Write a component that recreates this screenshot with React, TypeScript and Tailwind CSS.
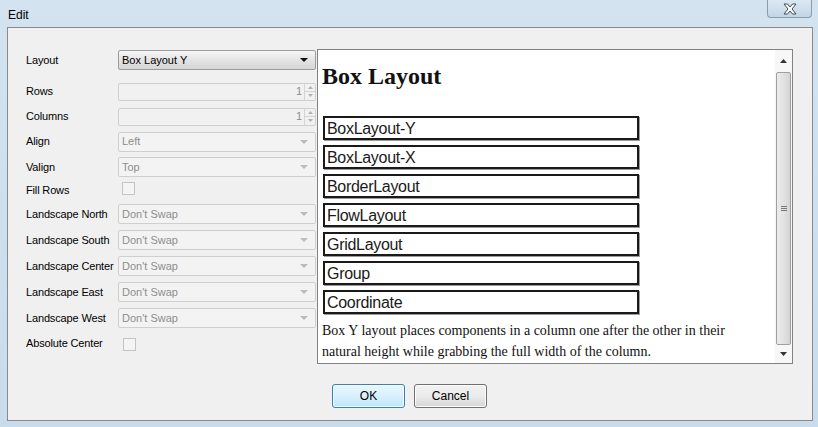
import React from "react";

const labelFont = { fontFamily: '"Liberation Sans", Arial, sans-serif' };

function Arrow({ disabled }: { disabled?: boolean }) {
  return (
    <svg width="8" height="4" viewBox="0 0 8 4" className="shrink-0">
      <path d="M0 0 H8 L4 4 Z" fill={disabled ? "#bcbcbc" : "#111"} />
    </svg>
  );
}

function Combo({ value, disabled }: { value: string; disabled?: boolean }) {
  if (!disabled) {
    return (
      <div className="flex h-[20px] w-[198px] items-center justify-between rounded-[2px] border border-[#9c9c9c] bg-gradient-to-b from-[#f6f6f6] via-[#e4e4e4] to-[#d6d6d6] pl-[3px] pr-[7px] text-[11px] text-black">
        <span>{value}</span>
        <Arrow />
      </div>
    );
  }
  return (
    <div className="flex h-[20px] w-[198px] items-center justify-between rounded-[2px] border border-[#cfcfcf] bg-[#f3f3f3] pl-[3px] pr-[7px] text-[11px] text-[#8e8e8e]">
      <span>{value}</span>
      <Arrow disabled />
    </div>
  );
}

function Spinner() {
  return (
    <div className="flex h-[18px] w-[198px] items-stretch rounded-[2px] border border-[#cfcfcf] bg-[#f1f1f1] text-[11px] text-[#8e8e8e]">
      <span className="flex flex-1 items-center justify-end pr-[2px]">1</span>
      <div className="flex w-[11px] flex-col border-l border-[#d4d4d4]">
        <div className="flex flex-1 items-center justify-center border-b border-[#d4d4d4]">
          <svg width="5" height="3" viewBox="0 0 5 3"><path d="M0 3 L2.5 0 L5 3 Z" fill="#b0b0b0" /></svg>
        </div>
        <div className="flex flex-1 items-center justify-center">
          <svg width="5" height="3" viewBox="0 0 5 3"><path d="M0 0 H5 L2.5 3 Z" fill="#b0b0b0" /></svg>
        </div>
      </div>
    </div>
  );
}

function Check() {
  return <div className="h-[13px] w-[13px] border border-[#c4c4c4] bg-[#f4f4f4]" />;
}

function Row({ label, h, children }: { label: string; h: string; children: React.ReactNode }) {
  return (
    <div className={`flex items-center ${h}`}>
      <span className="w-[92px] text-[11px] tracking-[-0.15px] text-black">{label}</span>
      {children}
    </div>
  );
}

const layouts = ["BoxLayout-Y", "BoxLayout-X", "BorderLayout", "FlowLayout", "GridLayout", "Group", "Coordinate"];

export default function App() {
  return (
    <div
      className="flex h-[427px] w-[818px] flex-col bg-gradient-to-b from-[#d3e3f0] to-[#c8dcec]"
      style={labelFont}
    >
      {/* title bar */}
      <div className="flex h-[27px] shrink-0 items-start justify-between">
        <span className="ml-[8px] mt-[6px] text-[12px] text-black">Edit</span>
        <div className="mr-[6px] flex h-[18px] w-[45px] items-center justify-center rounded-b-[4px] border border-t-0 border-[#8a9cad] bg-gradient-to-b from-[#dbe8f3] to-[#c3d6e6]">
          <svg width="14" height="12" viewBox="0 0 14 12">
            <path
              d="M1 1 H4.5 L7 4 L9.5 1 H13 L9 6 L13 11 H9.5 L7 8 L4.5 11 H1 L5 6 Z"
              fill="#ffffff"
              stroke="#404a55"
              strokeWidth="1"
              strokeLinejoin="round"
            />
          </svg>
        </div>
      </div>

      {/* client area */}
      <div className="mb-[6px] ml-[7px] mr-[5px] flex flex-1 flex-col border border-[#8a8a8a] bg-[#f0f0f0]">
        <div className="flex">
          {/* form */}
          <div className="flex flex-col pl-[18px] pt-[19px]">
            <Row label="Layout" h="h-[26px]"><Combo value="Box Layout Y" /></Row>
            <div className="h-[6px]" />
            <Row label="Rows" h="h-[25px]"><Spinner /></Row>
            <Row label="Columns" h="h-[25px]"><Spinner /></Row>
            <Row label="Align" h="h-[25px]"><Combo value="Left" disabled /></Row>
            <Row label="Valign" h="h-[26px]"><Combo value="Top" disabled /></Row>
            <div className="flex h-[21px] items-center">
              <span className="w-[92px] text-[11px] tracking-[-0.15px] text-black">Fill Rows</span>
              <div className="ml-[4px] -mt-[5px]"><Check /></div>
            </div>
            <Row label="Landscape North" h="h-[26px]"><Combo value="Don't Swap" disabled /></Row>
            <Row label="Landscape South" h="h-[26px]"><Combo value="Don't Swap" disabled /></Row>
            <Row label="Landscape Center" h="h-[26px]"><Combo value="Don't Swap" disabled /></Row>
            <Row label="Landscape East" h="h-[26px]"><Combo value="Don't Swap" disabled /></Row>
            <Row label="Landscape West" h="h-[26px]"><Combo value="Don't Swap" disabled /></Row>
            <div className="flex h-[24px] items-center">
              <span className="w-[92px] text-[11px] tracking-[-0.15px] text-black">Absolute Center</span>
              <div className="ml-[5px] mt-[3px]"><Check /></div>
            </div>
          </div>

          {/* html panel */}
          <div className="ml-[1px] mt-[21px] flex h-[315px] w-[476px] border border-[#828282] bg-white">
            <div className="flex flex-1 flex-col pl-[4px]" style={{ fontFamily: '"Liberation Serif", "Times New Roman", serif' }}>
              <h1 className="mt-[14px] text-[24px] font-bold leading-[24px] text-[#111]">Box Layout</h1>
              <div className="mt-[28px] flex flex-col gap-[5px] pl-[1px]">
                {layouts.map((l) => (
                  <div
                    key={l}
                    className="flex h-[24px] w-[316px] items-center border-2 border-[#1a1a1a] pl-[2px] pt-[1px] text-[16px] tracking-[-0.3px] text-[#1a1a1a] shadow-[1px_1px_0_#9a9a9a]"
                    style={labelFont}
                  >
                    {l}
                  </div>
                ))}
              </div>
              <p className="mt-[6px] pr-[40px] text-[14px] leading-[21px] text-[#111]">
                Box Y layout places components in a column one after the other in their natural height while grabbing the full width of the column.
              </p>
            </div>
            {/* scrollbar */}
            <div className="flex w-[17px] flex-col items-center bg-[#f7f7f7]">
              <div className="flex h-[22px] items-center justify-center">
                <svg width="7" height="4" viewBox="0 0 7 4"><path d="M0 4 L3.5 0 L7 4 Z" fill="#333" /></svg>
              </div>
              <div className="flex w-[15px] flex-1 items-center justify-center rounded-[2px] border border-[#a0a0a0] bg-gradient-to-r from-[#ececec] via-[#e2e2e2] to-[#d4d4d4]">
                <div className="flex flex-col gap-[1px]">
                  <div className="h-px w-[6px] bg-[#777]" />
                  <div className="h-px w-[6px] bg-[#777]" />
                  <div className="h-px w-[6px] bg-[#777]" />
                </div>
              </div>
              <div className="flex h-[18px] items-center justify-center">
                <svg width="7" height="4" viewBox="0 0 7 4"><path d="M0 0 H7 L3.5 4 Z" fill="#333" /></svg>
              </div>
            </div>
          </div>
        </div>

        {/* buttons */}
        <div className="ml-[324px] mt-[20px] flex gap-[9px]">
          <button className="h-[24px] w-[73px] rounded-[3px] border border-[#3c7fb1] bg-gradient-to-b from-[#eaf6fd] via-[#d9f0fc] to-[#bee6fd] text-[12px] text-black shadow-[inset_0_0_0_1px_#f4fbff]">
            OK
          </button>
          <button className="h-[24px] w-[73px] rounded-[3px] border border-[#707070] bg-gradient-to-b from-[#f2f2f2] via-[#ebebeb] to-[#d6d6d6] text-[12px] text-black shadow-[inset_0_0_0_1px_#fcfcfc]">
            Cancel
          </button>
        </div>
      </div>
    </div>
  );
}
